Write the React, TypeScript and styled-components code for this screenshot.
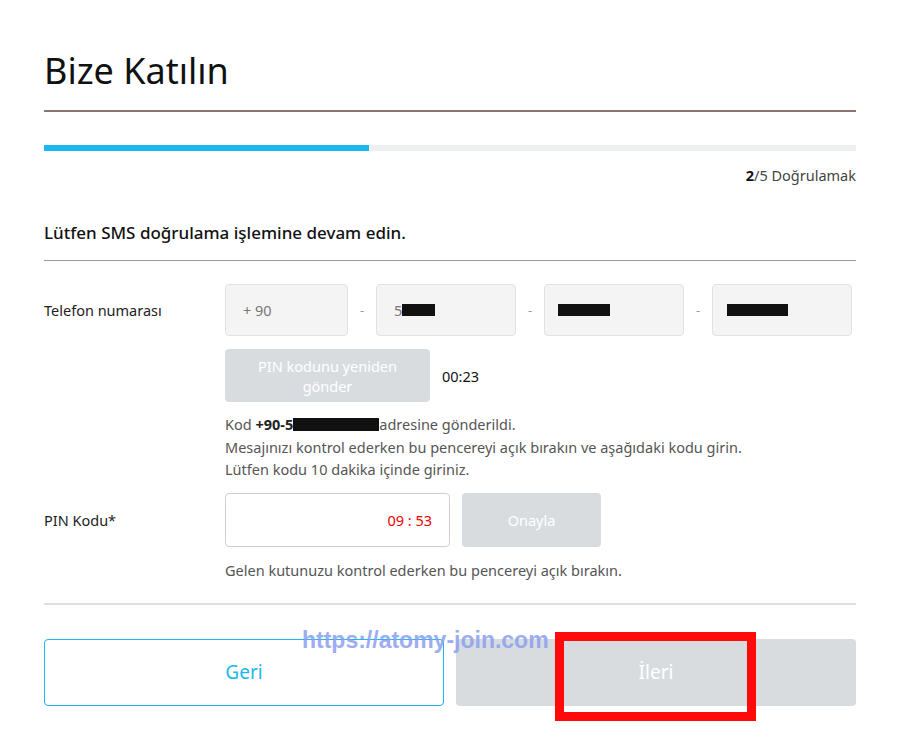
import React from "react";
import styled, { createGlobalStyle } from "styled-components";

const GlobalStyle = createGlobalStyle`
  body {
    margin: 0;
    background: #fff;
    font-family: "Noto Sans", "Open Sans", sans-serif;
    color: #222;
  }
`;

const Page = styled.div`
  position: relative;
  width: 812px;
  padding: 46px 44px 40px 44px;
`;

const Title = styled.h1`
  margin: 0;
  font-size: 36px;
  font-weight: 400;
  line-height: 50px;
  color: #111;
  padding-bottom: 14px;
  border-bottom: 2px solid #8a7670;
`;

const Track = styled.div`
  margin-top: 33px;
  height: 6px;
  background: #eeeff0;
`;

const Fill = styled.div`
  height: 100%;
  background: #1ab8f0;
`;

const Step = styled.div`
  margin-top: 14px;
  text-align: right;
  font-size: 14.5px;
  color: #444;
  line-height: 20px;
  b {
    color: #111;
    font-weight: 700;
  }
`;

const Lead = styled.h2`
  margin: 35px 0 0;
  font-size: 17px;
  font-weight: 500;
  line-height: 26px;
  color: #111;
  padding-bottom: 14px;
  border-bottom: 1px solid #999;
`;

const Row = styled.div<{ $top: number }>`
  display: grid;
  grid-template-columns: 181px 1fr;
  margin-top: ${(p) => p.$top}px;
`;

const Label = styled.div<{ $h: number }>`
  font-size: 14.5px;
  color: #222;
  height: ${(p) => p.$h}px;
  display: flex;
  align-items: center;
`;

const PhoneRow = styled.div`
  display: flex;
  align-items: center;
`;

const PhoneBox = styled.div<{ $w: number; $pad: number }>`
  width: ${(p) => p.$w}px;
  height: 52px;
  box-sizing: border-box;
  background: #f4f4f4;
  border: 1px solid #e2e2e2;
  border-radius: 4px;
  display: flex;
  align-items: center;
  padding-left: ${(p) => p.$pad}px;
  font-size: 14.5px;
  color: #777;
`;

const Dash = styled.span`
  width: 28px;
  text-align: center;
  font-size: 13px;
  color: #999;
`;

const Redact = styled.span<{ $w: number }>`
  display: inline-block;
  width: ${(p) => p.$w}px;
  height: 12px;
  background: #111;
`;

const GreyButton = styled.button<{ $w: number; $h: number }>`
  width: ${(p) => p.$w}px;
  height: ${(p) => p.$h}px;
  background: #d8dcdf;
  border: none;
  border-radius: 4px;
  color: #fff;
  font-family: inherit;
  font-size: 14.5px;
  line-height: 20px;
  padding: 0 20px;
`;

const ResendRow = styled.div`
  display: flex;
  align-items: center;
  gap: 12px;
  margin-top: 13px;
  font-size: 14.5px;
  color: #111;
`;

const Notes = styled.div`
  margin-top: 11px;
  font-size: 14.5px;
  line-height: 22.5px;
  color: #555;
  b {
    color: #222;
    font-weight: 700;
  }
`;

const PinRow = styled.div`
  display: flex;
  gap: 12px;
`;

const PinInput = styled.div`
  width: 225px;
  height: 54px;
  box-sizing: border-box;
  border: 1px solid #cfcfcf;
  border-radius: 4px;
  display: flex;
  align-items: center;
  justify-content: flex-end;
  padding-right: 17px;
  font-size: 14.5px;
  color: #e00;
`;

const Hint = styled.div`
  margin-top: 12px;
  font-size: 14.5px;
  color: #555;
  line-height: 22px;
`;

const Divider = styled.div`
  margin-top: 22px;
  border-top: 2px solid #dddfe1;
`;

const Actions = styled.div`
  display: grid;
  grid-template-columns: 1fr 1fr;
  gap: 12px;
  margin-top: 34px;
`;

const NavButton = styled.button<{ $primary?: boolean }>`
  height: 67px;
  border-radius: 4px;
  font-family: inherit;
  font-size: 19px;
  border: ${(p) => (p.$primary ? "none" : "1px solid #1ab8f0")};
  background: ${(p) => (p.$primary ? "#d8dcdf" : "#fff")};
  color: ${(p) => (p.$primary ? "#fff" : "#1ab8f0")};
`;

const Watermark = styled.div`
  position: absolute;
  left: 302px;
  top: 627px;
  font-family: "Liberation Sans", Arial, sans-serif;
  font-size: 23px;
  font-weight: 700;
  color: #8c9ff0;
  opacity: 0.85;
`;

const Highlight = styled.div`
  position: absolute;
  left: 555px;
  top: 632px;
  width: 201px;
  height: 89px;
  box-sizing: border-box;
  border: 9px solid #ff0a0a;
`;

export default function App() {
  return (
    <>
      <GlobalStyle />
      <Page>
        <Title>Bize Katılın</Title>
        <Track>
          <Fill style={{ width: "40%" }} />
        </Track>
        <Step>
          <b>2</b>/5 Doğrulamak
        </Step>
        <Lead>Lütfen SMS doğrulama işlemine devam edin.</Lead>

        <Row $top={23}>
          <Label $h={52}>Telefon numarası</Label>
          <div>
            <PhoneRow>
              <PhoneBox $w={123} $pad={17}>+ 90</PhoneBox>
              <Dash>-</Dash>
              <PhoneBox $w={140} $pad={17}>
                5<Redact $w={33} />
              </PhoneBox>
              <Dash>-</Dash>
              <PhoneBox $w={140} $pad={13}>
                <Redact $w={52} />
              </PhoneBox>
              <Dash>-</Dash>
              <PhoneBox $w={140} $pad={14}>
                <Redact $w={61} />
              </PhoneBox>
            </PhoneRow>
            <ResendRow>
              <GreyButton $w={205} $h={53}>
                PIN kodunu yeniden gönder
              </GreyButton>
              00:23
            </ResendRow>
            <Notes>
              Kod <b>+90-5</b>
              <Redact $w={86} style={{ height: 13, verticalAlign: -1 }} />
              adresine gönderildi.
              <br />
              Mesajınızı kontrol ederken bu pencereyi açık bırakın ve aşağıdaki kodu girin.
              <br />
              Lütfen kodu 10 dakika içinde giriniz.
            </Notes>
          </div>
        </Row>

        <Row $top={12}>
          <Label $h={54}>PIN Kodu*</Label>
          <div>
            <PinRow>
              <PinInput>09 : 53</PinInput>
              <GreyButton $w={139} $h={54}>
                Onayla
              </GreyButton>
            </PinRow>
            <Hint>Gelen kutunuzu kontrol ederken bu pencereyi açık bırakın.</Hint>
          </div>
        </Row>

        <Divider />
        <Actions>
          <NavButton>Geri</NavButton>
          <NavButton $primary>İleri</NavButton>
        </Actions>
        <Watermark>https://atomy-join.com</Watermark>
        <Highlight />
      </Page>
    </>
  );
}
